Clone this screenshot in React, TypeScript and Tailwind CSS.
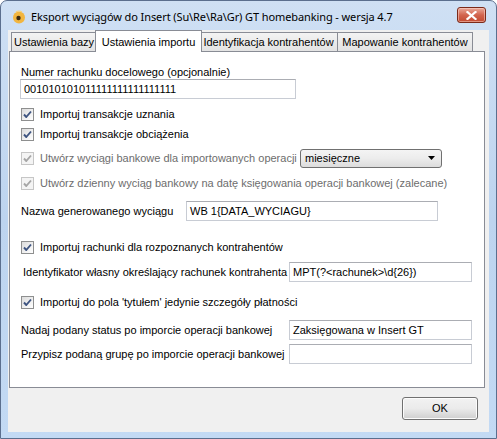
import React from "react";

const F = { fontFamily: '"Liberation Sans", Arial, sans-serif' };

function Check({ disabled = false }: { disabled?: boolean }) {
  return (
    <div
      className={
        "w-[13px] h-[13px] shrink-0 border flex items-center justify-center " +
        (disabled ? "border-[#c6c6c6] bg-[#f4f4f4]" : "border-[#8e8f8f] bg-gradient-to-br from-[#dcdcdc] to-[#ffffff]")
      }
    >
      <svg width="11" height="11" viewBox="0 0 11 11">
        <path
          d="M2 5.5 L4.3 8 L9 2.5"
          fill="none"
          stroke={disabled ? "#a6a6a6" : "#3e5480"}
          strokeWidth="1.9"
          strokeLinejoin="round"
        />
      </svg>
    </div>
  );
}

function Input({ value, w }: { value: string; w: string }) {
  return (
    <div
      className={
        w +
        " h-[20px] shrink-0 bg-white border border-[#c8ccd4] border-t-[#abadb3] flex items-center pl-[3px] text-[11px] text-black leading-none"
      }
    >
      {value}
    </div>
  );
}

function CbRow({ label, disabled = false, mt }: { label: string; disabled?: boolean; mt: string }) {
  return (
    <div className={"h-[20px] flex items-center " + mt}>
      <Check disabled={disabled} />
      <span className={"ml-[6px] text-[11px] " + (disabled ? "text-[#6d6d6d]" : "text-black")}>{label}</span>
    </div>
  );
}

export default function App() {
  return (
    <div className="w-[497px] h-[439px] bg-white overflow-hidden" style={F}>
      <div className="w-full h-full rounded-t-[7px] border border-[#5b6f8e] bg-gradient-to-b from-[#cfe0f4] via-[#bdd4ef] to-[#c3daf4] flex flex-col">
        {/* title bar */}
        <div className="h-[29px] shrink-0 flex items-center pl-[11px] pr-[10px]">
          <svg width="14" height="14" viewBox="0 0 14 14" className="shrink-0 mt-[2px]">
            <circle cx="7" cy="7.5" r="6" fill="#f2b640" />
            <circle cx="6.5" cy="8" r="2.2" fill="#3a2a10" />
            <path d="M4 2 Q7 0 10 2" fill="none" stroke="#f7d27a" strokeWidth="1.2" />
          </svg>
          <span
            className="ml-[5px] text-[11px] tracking-[-0.1px] text-black whitespace-nowrap mt-[3px]"
            style={{ fontFamily: '"Noto Sans", "Open Sans", sans-serif' }}
          >
            Eksport wyciągów do Insert (Su\Re\Ra\Gr) GT homebanking - wersja 4.7
          </span>
          <div className="ml-auto mt-[-1px] w-[29px] h-[16px] rounded-[3px] border border-[#7b2a1a] bg-gradient-to-b from-[#e9a99a] via-[#d2644e] to-[#c24a31] flex items-center justify-center shadow-[inset_0_0_0_1px_rgba(255,220,210,0.5)]">
            <svg width="11" height="9" viewBox="0 0 11 9">
              <path d="M1.5 1 L9.5 8 M9.5 1 L1.5 8" stroke="#ffffff" strokeWidth="2.2" strokeLinecap="square" />
            </svg>
          </div>
        </div>

        {/* client area */}
        <div className="flex-1 mx-[7px] bg-[#f0f0f0] flex flex-col">
          <div className="ml-[1px] w-[476px] flex flex-col">
            {/* tabs */}
            <div className="h-[22px] flex items-end pl-[2px] relative z-10">
              <div className="w-[86px] h-[19px] mb-[1px] border border-b-0 border-[#898c95] bg-gradient-to-b from-[#f3f3f3] to-[#e3e3e3] flex items-center justify-center text-[11px] text-black">
                Ustawienia bazy
              </div>
              <div className="w-[107px] h-[22px] -mx-[2px] relative z-10 border border-b-0 border-[#898c95] bg-white flex items-start pt-[3px] justify-center text-[11px] text-black">
                Ustawienia importu
              </div>
              <div className="w-[138px] h-[19px] mb-[1px] border border-b-0 border-l-0 border-[#898c95] bg-gradient-to-b from-[#f3f3f3] to-[#e3e3e3] flex items-center justify-center text-[11px] text-black">
                Identyfikacja kontrahentów
              </div>
              <div className="w-[135px] h-[19px] mb-[1px] border border-b-0 border-l-0 border-[#898c95] bg-gradient-to-b from-[#f3f3f3] to-[#e3e3e3] flex items-center justify-center text-[11px] text-black">
                Mapowanie kontrahentów
              </div>
            </div>
            {/* panel */}
            <div className="h-[337px] -mt-[1px] border border-[#898c95] bg-white flex flex-col pl-[11px] text-[11px] text-black">
              <div className="h-[13px] mt-[14px] leading-[13px]">Numer rachunku docelowego (opcjonalnie)</div>
              <div className="-ml-[1px]">
                <Input value="001010101011111111111111111" w="w-[276px]" />
              </div>
              <CbRow label="Importuj transakcje uznania" mt="mt-[5px]" />
              <CbRow label="Importuj transakcje obciążenia" mt="mt-0" />
              <div className="h-[20px] flex items-center mt-[4px]">
                <div className="w-[279px] flex items-center">
                  <Check disabled />
                  <span className="ml-[6px] text-[#6d6d6d]">Utwórz wyciągi bankowe dla importowanych operacji</span>
                </div>
                <div className="w-[142px] h-[19px] rounded-[3px] border border-[#707070] bg-gradient-to-b from-[#f4f4f4] via-[#ececec] to-[#dcdcdc] flex items-center pl-[4px] pr-[6px]">
                  <span className="flex-1">miesięczne</span>
                  <svg width="7" height="4" viewBox="0 0 7 4">
                    <path d="M0 0 L7 0 L3.5 4 Z" fill="#000" />
                  </svg>
                </div>
              </div>
              <CbRow
                label="Utwórz dzienny wyciąg bankowy na datę księgowania operacji bankowej (zalecane)"
                disabled
                mt="mt-[5px]"
              />
              <div className="h-[20px] flex items-center mt-[8px]">
                <div className="w-[165px]">Nazwa generowanego wyciągu</div>
                <Input value="WB 1{DATA_WYCIAGU}" w="w-[252px]" />
              </div>
              <CbRow label="Importuj rachunki dla rozpoznanych kontrahentów" mt="mt-[16px]" />
              <div className="h-[20px] flex items-center mt-[5px]">
                <div className="w-[268px] pl-[2px]">Identyfikator własny określający rachunek kontrahenta</div>
                <Input value="MPT(?<rachunek>\d{26})" w="w-[183px]" />
              </div>
              <CbRow label="Importuj do pola 'tytułem' jedynie szczegóły płatności" mt="mt-[10px]" />
              <div className="h-[20px] flex items-center mt-[8px]">
                <div className="w-[268px]">Nadaj podany status po imporcie operacji bankowej</div>
                <Input value="Zaksięgowana w Insert GT" w="w-[183px]" />
              </div>
              <div className="h-[20px] flex items-center mt-[4px]">
                <div className="w-[268px]">Przypisz podaną grupę po imporcie operacji bankowej</div>
                <Input value="" w="w-[183px]" />
              </div>
            </div>
          </div>
          {/* bottom */}
          <div className="flex justify-end pr-[11px] mt-[9px]">
            <div className="w-[76px] h-[23px] rounded-[3px] border border-[#707070] bg-gradient-to-b from-[#f2f2f2] via-[#ebebeb] to-[#cfcfcf] flex items-center justify-center text-[11px] text-black shadow-[inset_0_0_0_1px_#fcfcfc]">
              OK
            </div>
          </div>
        </div>
        <div className="h-[6px] shrink-0" />
      </div>
    </div>
  );
}
